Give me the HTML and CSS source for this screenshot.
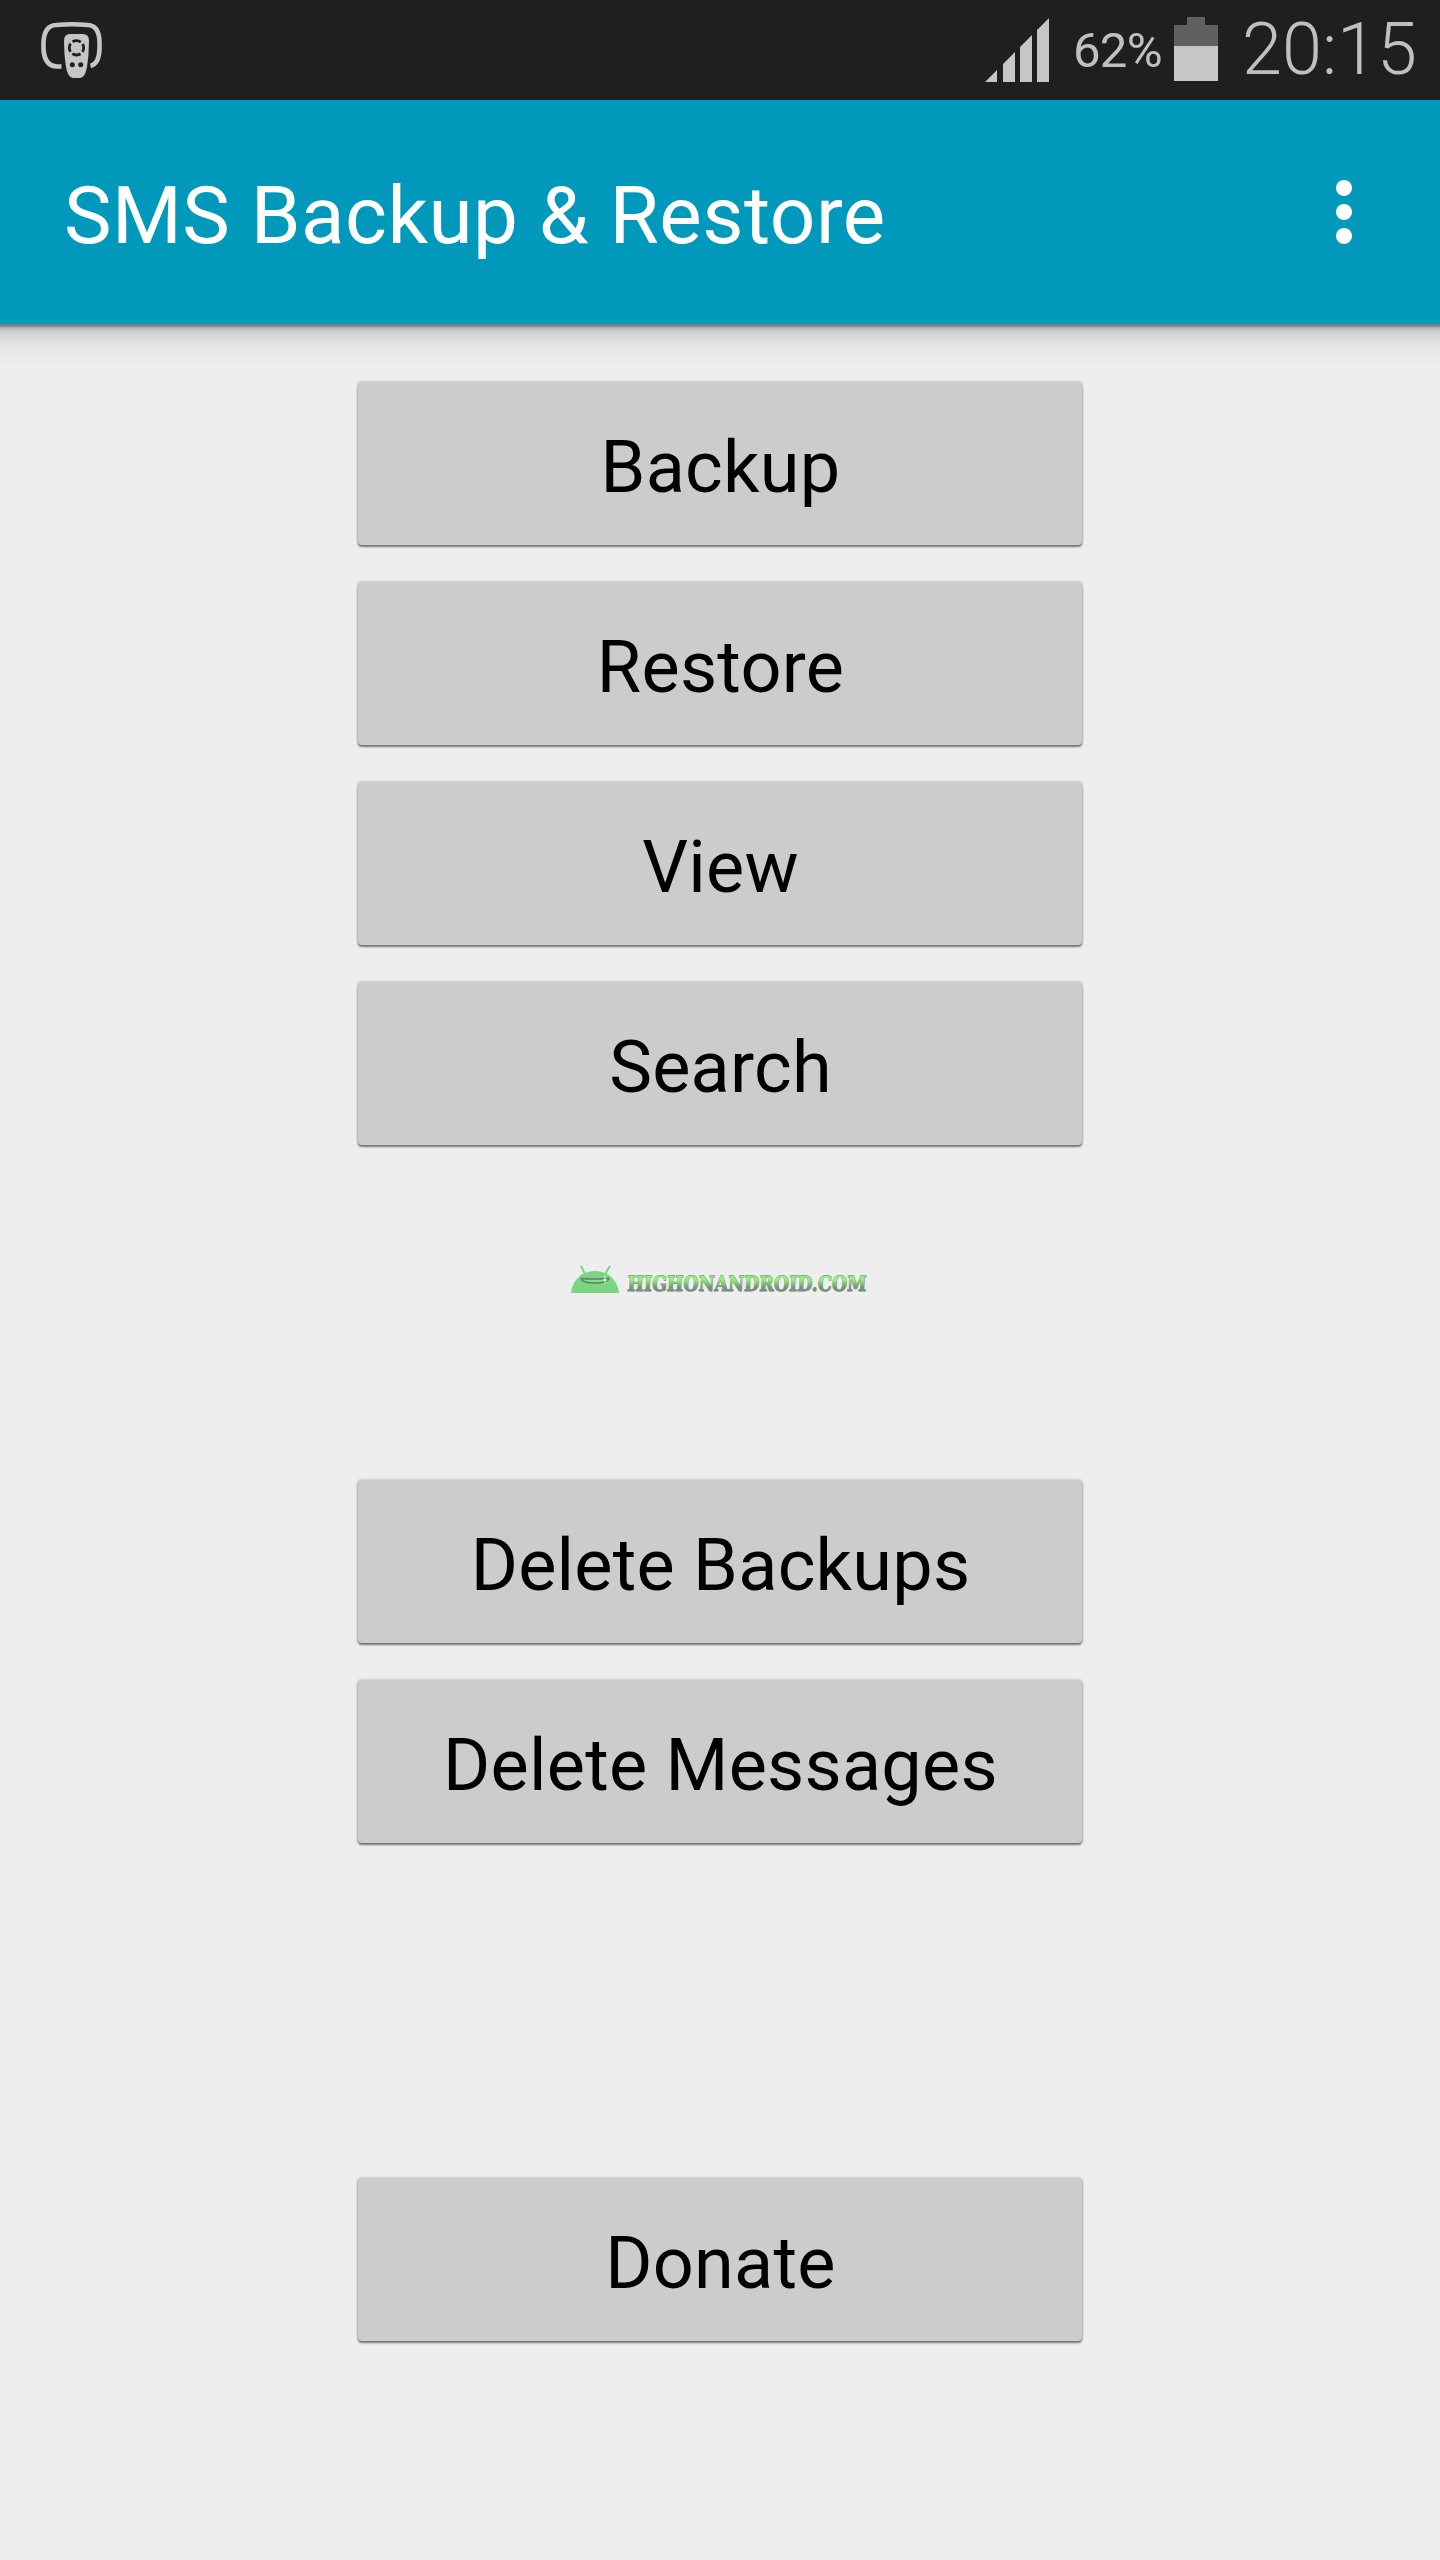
FILE: index.html
```html
<!DOCTYPE html>
<html lang="en">
<head>
<meta charset="utf-8">
<title>SMS Backup &amp; Restore</title>
<link rel="stylesheet" href="styles.css">
</head>
<body>
<div class="statusbar">
  <svg class="remote" width="64" height="60" viewBox="0 0 64 60">
    <path d="M21.500 46.500H17Q4.500 46 3.500 29V22Q4.500 5.500 16 5Q32 3.500 48 5Q59 5.500 59.500 22V29Q59 44 50.500 46" fill="none" stroke="#c6c6c6" stroke-width="4.600"/>
    <path d="M24 21Q24 14 30 14H43Q49 14 49 21Q49 35 47 47Q45 58 40 58H33Q28 58 26 47Q24 35 24 21Z" fill="#c6c6c6"/>
    <circle cx="36.500" cy="27.800" r="7.200" fill="none" stroke="#1f1f1f" stroke-width="2.800" stroke-dasharray="8.700 2.610" stroke-dashoffset="4.350"/>
    <circle cx="32.300" cy="44.700" r="2.500" fill="#1f1f1f"/>
    <circle cx="40.700" cy="44.700" r="2.500" fill="#1f1f1f"/>
  </svg>
  <svg class="signal" width="64" height="64" viewBox="0 0 64 64" fill="#c6c6c6">
    <path d="M0 64L12 52V64ZM18 64V46L30 34V64ZM35 64V29L47 17V64ZM52 64V12L64 0V64Z"/>
  </svg>
  <span class="percent">62%</span>
  <svg class="battery" width="44" height="64" viewBox="0 0 44 64">
    <path d="M0 29V8H13V0H31V8H44V29Z" fill="#606060"/>
    <path d="M0 29H44V64H0Z" fill="#c6c6c6"/>
  </svg>
  <span class="clock">20:15</span>
</div>
<header class="appbar">
  <h1 class="title">SMS Backup &amp; Restore</h1>
  <div class="overflow"><i class="dot"></i><i class="dot"></i><i class="dot"></i></div>
</header>
<main class="content">
  <button class="btn">Backup</button>
  <button class="btn">Restore</button>
  <button class="btn">View</button>
  <button class="btn">Search</button>
  <div class="brand">
    <svg class="brand-logo" width="304" height="40" viewBox="0 0 304 40">
      <defs>
        <linearGradient id="lettering" x1="0" y1="0" x2="0" y2="1">
          <stop offset="0.350" stop-color="#8cf576"/>
          <stop offset="0.650" stop-color="#75927a"/>
        </linearGradient>
      </defs>
      <path d="M0 28Q1 17 10 10Q24 2 38 10Q47 17 48 28Z" fill="#7bd683"/>
      <path d="M10 1L14 9M39 1L34 9" stroke="#7bd683" stroke-width="2"/>
      <path d="M10 13.500Q24 14.500 38 13.500Q37 18 24 18Q11 18 10 13.500Z" fill="#83e184" stroke="#657e69" stroke-width="1.400"/>
      <path d="M34 9L34.700 14L36.500 15L34.700 16L34 20L33.300 16L31 15L33.300 14Z" fill="#d4f8d2"/>
      <text class="brand-text" transform="translate(56 26.200) skewX(-3)" textLength="239" lengthAdjust="spacingAndGlyphs">HIGHONANDROID.COM</text>
    </svg>
  </div>
  <button class="btn">Delete Backups</button>
  <button class="btn">Delete Messages</button>
  <button class="btn donate">Donate</button>
</main>
</body>
</html>
```
FILE: styles.css
```css
* { box-sizing: border-box; }
body {
  margin: 0;
  min-height: 2560px;
  background: #eeeeee;
  font-family: Roboto, sans-serif;
}
.statusbar {
  display: flex;
  height: 100px;
  background: #1f1f1f;
  color: #c0c0c0;
}
.remote { margin: 20px auto 0 40px; }
.signal { margin-top: 18px; }
.percent {
  width: 89px;
  margin-left: 24px;
  font-size: 49px;
  line-height: 102px;
  letter-spacing: -0.7px;
  white-space: nowrap;
}
.battery { margin: 17px 0 0 12px; }
.clock {
  width: 222px;
  padding-left: 24px;
  font-size: 72px;
  font-weight: 300;
  line-height: 99px;
  white-space: nowrap;
}
.appbar {
  display: flex;
  justify-content: space-between;
  height: 224px;
  padding: 0 88px 0 64px;
  background: #0099bc;
}
.title {
  margin: 0;
  padding-top: 4px;
  color: #ffffff;
  font-size: 80px;
  font-weight: 400;
  line-height: 224px;
  letter-spacing: 0.5px;
  white-space: nowrap;
}
.overflow {
  display: flex;
  flex-direction: column;
  gap: 8px;
  padding-top: 80px;
}
.dot {
  width: 16px;
  height: 16px;
  border-radius: 50%;
  background: #ffffff;
}
.content {
  display: flex;
  flex-direction: column;
  align-items: center;
  gap: 37px;
  padding-top: 58px;
  background: linear-gradient(#808080 2px, #b8b8b8 4px, #cfcfcf 8px, #e0e0e0 18px, #e8e8e8 26px, #eeeeee 42px);
}
.btn {
  width: 724px;
  height: 163px;
  padding: 8px 0 0 1px;
  border: 0;
  border-radius: 4px;
  background: #cccccc;
  box-shadow: 0 2px 2px #777777, 0 0 3px rgba(0, 0, 0, 0.3);
  color: #000000;
  font: 400 72px/155px Roboto, sans-serif;
  letter-spacing: 0.25px;
}
.brand {
  height: 261px;
  padding: 83px 0 0 6px;
}
.brand-logo { overflow: visible; }
.brand-text {
  font: 700 21px/1.5 "DejaVu Serif", serif;
  fill: url(#lettering);
  stroke: #728073;
  stroke-width: 0.9px;
  paint-order: stroke;
}
.donate { margin-top: 298px; }
```
